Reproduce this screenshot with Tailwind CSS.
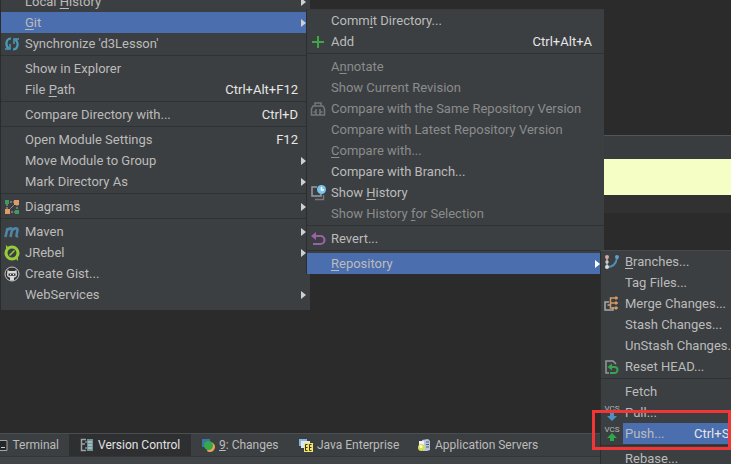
<!DOCTYPE html>
<html lang="en">
<head>
<meta charset="utf-8">
<title>Git push menu</title>
<script src="https://cdn.jsdelivr.net/npm/@tailwindcss/browser@4"></script>
</head>
<body class="relative flex h-screen flex-col overflow-hidden bg-[#2b2b2b] font-['Roboto','Noto_Sans',sans-serif] text-[13px] text-[#bbbbbb]">

<!-- Editor area -->
<main class="flex-1">
  <div class="h-[135px]"></div>
  <div class="h-6 border-t border-[#515658] bg-[#393d3f]"></div>
  <div class="h-9 bg-[#f5ffc5]"></div>
  <div class="h-[18px] bg-[#313131]"></div>
</main>

<!-- Tool window bar -->
<footer class="bg-[#3c3f41]">
  <nav class="flex h-[23px] border-t border-[#4b4e50] text-xs [&_button]:flex [&_button]:items-center [&_button]:gap-1 [&_button]:whitespace-nowrap [&_svg]:size-[14px] [&_svg]:shrink-0">
    <button class="w-[69px] shrink-0 justify-end pr-[10px]"><svg viewBox="0 0 14 14"><path d="M1 2.500h12v10H1z" fill="#242628" stroke="#a0a4a6"/><path d="M3 5l2 2-2 2M7 9.500h4" fill="none" stroke="#ccc"/></svg>Terminal</button>
    <button class="w-[122px] shrink-0 bg-[#2d2f30] pl-[11px] text-[#e2e2e2]"><svg viewBox="0 0 14 14"><path d="M6 1.500H1.500V6H5M1.500 9v3.500H6M1.500 6v3" fill="none" stroke="#9da2a5" stroke-width="1.500"/><path d="M7 1h6v12H7z" fill="#6f9499"/><path d="M8 4h4M8 7h4M8 10h4" stroke="#d5e1e2"/><path d="M5 4h2M5 10h2" stroke="#bbb"/></svg>Version Control</button>
    <button class="w-[98px] shrink-0 pl-[10px]"><svg viewBox="0 0 14 14"><path d="M1 1h8v8H1z" fill="#3578a6"/><path d="M9 4a5 5 0 1 1-3 9z" fill="#e5a453"/><circle cx="7.500" cy="7.500" r="4.500" fill="#35a84b"/></svg><span><u>9</u>: Changes</span></button>
    <button class="w-[117px] shrink-0 pl-[10px]"><svg viewBox="0 0 14 14"><path d="M0 1h8v7H0z" fill="#87b6d9"/><path d="M2 3h9v7H2z" fill="#dbe8f0"/><path d="M5 5h9v9H5z" fill="#f4e66a"/><path d="M8.500 6.500h-2v6h2M6.500 9.500h2M12.500 6.500h-2v6h2M10.500 9.500h2" fill="none" stroke="#393512"/></svg>Java Enterprise</button>
    <button class="shrink-0 pl-[11px]"><svg viewBox="0 0 14 14"><path d="M5 2l6-1 2 2v9l-3 1H6z" fill="#b9c5d6"/><path d="M9 4h3M9 6.500h3M9 9h3" stroke="#455d88"/><path d="M2 3h5v4H2z" fill="#edf1f5"/><circle cx="4.500" cy="9.500" r="3.500" fill="#d6dd54"/><circle cx="4" cy="8.500" r="1.500" fill="#f8fad0"/></svg>Application Servers</button>
  </nav>
  <div class="h-2 border-t border-[#343638] bg-[#414547]"></div>
</footer>

<!-- Project context menu -->
<div role="menu" class="absolute -top-[9px] left-0 w-[310px] border-l border-[#292b2c] bg-[#3c3f41] pb-[5px] [&_button]:relative [&_button]:flex [&_button]:h-[21px] [&_button]:w-full [&_button]:items-center [&_button]:gap-[5px] [&_button]:pr-3 [&_button]:pl-[3px] [&_button]:whitespace-nowrap [&_hr]:mt-px [&_hr]:mb-[2px] [&_hr]:border-[#2f3233] [&_kbd]:ml-auto [&_kbd]:font-[inherit] [&_kbd]:text-[#e6e6e6] [&_svg]:size-4 [&_svg]:shrink-0 [&_i]:absolute [&_i]:right-1 [&_i]:border-y-4 [&_i]:border-l-5 [&_i]:border-y-transparent [&_i]:border-l-[#d0d0d0] [&_u]:underline-offset-2">
  <button><svg></svg><span>Local <u>H</u>istory</span><i></i></button>
  <button class="bg-[#4b6eaf]"><svg></svg><span><u>G</u>it</span><i></i></button>
  <button><svg viewBox="0 0 16 16" fill="none" stroke="#4a9abb" stroke-width="2.200"><path d="M7 2.500C2 2.500 1 9 4.500 12.500M9 13.500c5 0 6-6.500 2.500-10"/><path d="M1 13h5V8M15 3h-5v5" stroke-width="1.500"/></svg>Synchronize 'd3Lesson'</button>
  <hr>
  <button><svg></svg>Show in Explorer</button>
  <button><svg></svg><span>File <u>P</u>ath</span><kbd>Ctrl+Alt+F12</kbd></button>
  <hr>
  <button><svg></svg>Compare Directory with...<kbd>Ctrl+D</kbd></button>
  <hr>
  <button><svg></svg>Open Module Settings<kbd>F12</kbd></button>
  <button><svg></svg>Move Module to Group<i></i></button>
  <button><svg></svg>Mark Directory As<i></i></button>
  <hr>
  <button><svg viewBox="0 0 16 16"><path d="M3 3h10v10H3zM3 13L13 3" fill="none" stroke="#a8adaf" stroke-dasharray="2 1"/><path d="M1 1h4v4H1zM11 11h4v4h-4z" fill="#3f9b5b"/><path d="M10 1h5v5h-5zM1 10h5v5H1z" fill="#e09a66"/></svg>Diagrams<i></i></button>
  <hr>
  <button><svg viewBox="0 0 16 16" fill="none" stroke="#4f86a8" stroke-width="2.600"><path d="M1.500 13L3.500 4M3 6.500C5 4 8.500 3.500 8 6L6.500 13M8 6.500c2-2.500 6-3 5.500-.5L12.500 11c-.3 1.200.4 1.500 1.500 1"/></svg>Maven<i></i></button>
  <button><svg viewBox="0 0 16 16"><path d="M4 2L2 0v4zM12 14l2 2v-4z" fill="#99cc3d"/><circle cx="8" cy="8" r="6" fill="none" stroke="#99cc3d" stroke-width="3"/><path d="M5.500 10.500l5-5" stroke="#99cc3d" stroke-width="1.500"/></svg>JRebel<i></i></button>
  <button><svg viewBox="0 0 16 16"><circle cx="8" cy="8" r="7" fill="#303234" stroke="#c6c8c9"/><path d="M3.500 4l2 1h5l2-1 .5 5c-.5 2-2 2.500-3 2.500v3H6v-3C4.500 11.500 3 10.500 3 9z" fill="#d8dada"/><path d="M4.500 7.500h7v2.300h-7z" fill="#383a3c"/><path d="M6 8.500h1M9 8.500h1" stroke="#eee"/></svg>Create Gist...</button>
  <button><svg></svg>WebServices<i></i></button>
</div>

<!-- Git submenu -->
<div role="menu" class="absolute top-[9px] left-[306px] w-[298px] border-t border-l border-t-[#393c3d] border-l-[#2b2d2e] bg-[#3c3f41] [&_button]:relative [&_button]:flex [&_button]:h-[21px] [&_button]:w-full [&_button]:items-center [&_button]:gap-[5px] [&_button]:pr-3 [&_button]:pl-[3px] [&_button]:whitespace-nowrap [&_button:disabled]:text-[#8a8c8d] [&_hr]:mt-px [&_hr]:mb-[2px] [&_hr]:border-[#2f3233] [&_kbd]:ml-auto [&_kbd]:font-[inherit] [&_kbd]:text-[#e6e6e6] [&_svg]:size-4 [&_svg]:shrink-0 [&_u]:underline-offset-2">
  <button><svg></svg><span>Comm<u>i</u>t Directory...</span></button>
  <button><svg viewBox="0 0 16 16"><path d="M8 2v12M2 8h12" stroke="#3fa648" stroke-width="2"/></svg>Add<kbd>Ctrl+Alt+A</kbd></button>
  <hr>
  <button disabled><svg></svg><span>A<u>n</u>notate</span></button>
  <button disabled><svg></svg>Show Current Revision</button>
  <button disabled><svg viewBox="0 0 16 16" fill="none" stroke="#74787a" stroke-width="1.500"><path d="M5 4.500V2h6v2.500M3 5h10l1.500 3v6h-13V8zM6 8v6M10 8v6M3.500 11H6M10 11h2.500"/></svg>Compare with the Same Repository Version</button>
  <button disabled><svg></svg>Compare with Latest Repository Version</button>
  <button disabled><svg></svg><span><u>C</u>ompare with...</span></button>
  <button><svg></svg>Compare with Branch...</button>
  <button><svg viewBox="0 0 16 16"><path d="M7 2H2v9h9V9" fill="none" stroke="#989ca0" stroke-width="1.500"/><path d="M5 14.500h8.500V10" fill="none" stroke="#75797c" stroke-width="1.500"/><circle cx="11.500" cy="4.500" r="4.500" fill="#79c4eb"/><path d="M11.500 2v3H14" fill="none" stroke="#f4fbff" stroke-width="1.500"/></svg><span>Show <u>H</u>istory</span></button>
  <button disabled><svg></svg><span>Show History <u>f</u>or Selection</span></button>
  <hr>
  <button><svg viewBox="0 0 16 16"><path d="M4 5h6.500a3.500 3.500 0 0 1 0 8H3" fill="none" stroke="#9a62a5" stroke-width="2.200"/><path d="M1 5l5-4v8z" fill="#9a62a5"/></svg>Revert...</button>
  <hr>
  <button class="bg-[#4b6eaf]"><svg></svg><span><u>R</u>epository</span><span class="absolute right-1 border-y-4 border-l-5 border-y-transparent border-l-white"></span></button>
</div>

<!-- Repository submenu -->
<div role="menu" class="absolute top-[250px] right-0 left-[600px] overflow-hidden border-t border-l border-t-[#484b4d] border-l-[#2b2d2e] bg-[#3c3f41] [&_button]:flex [&_button]:h-[21px] [&_button]:w-full [&_button]:items-center [&_button]:gap-[5px] [&_button]:pl-[3px] [&_button]:whitespace-nowrap [&_hr]:mt-px [&_hr]:mb-[2px] [&_hr]:border-[#2f3233] [&_svg]:size-4 [&_svg]:shrink-0 [&_u]:underline-offset-2">
  <button><svg viewBox="0 0 16 16"><path d="M3 3v10" stroke="#a9adaf" stroke-width="1.500"/><path d="M3 13c5 0 9-2 10-9" fill="none" stroke="#4f8fb8" stroke-width="1.800"/><circle cx="3" cy="3" r="2" fill="#d8a3a3"/><circle cx="3" cy="8" r="1.700" fill="#c8caca"/><circle cx="3" cy="13" r="2" fill="#d9dbdb"/><circle cx="13" cy="3" r="2" fill="#5b9fca"/></svg><span><u>B</u>ranches...</span></button>
  <button><svg></svg>Tag Files...</button>
  <button><svg viewBox="0 0 16 16" fill="none" stroke-width="1.500"><path d="M5 6H1v8h8v-3M3.500 9H7" stroke="#a7abad"/><path d="M14 2H6.500v10H14M6.500 7H14" stroke="#d29a68"/><path d="M12 .5v3M12 5.500v3M12 10.500v3" stroke="#d29a68" stroke-width="2"/></svg>Merge Changes...</button>
  <button><svg></svg>Stash Changes...</button>
  <button><svg></svg>UnStash Changes...</button>
  <button><svg viewBox="0 0 16 16" fill="none"><path d="M5 14H2V2h7l3 3" stroke="#94999c" stroke-width="1.500"/><path d="M6 8h4.500a3 3 0 0 1 0 6H6" stroke="#36a450" stroke-width="2"/><path d="M3.500 8L8 4.500v7z" fill="#36a450"/></svg>Reset HEAD...</button>
  <hr>
  <button><svg></svg>Fetch</button>
  <button><svg viewBox="0 0 16 16"><text x="8" y="6" text-anchor="middle" font-size="8" fill="#b4b6b7">VCS</text><path d="M6 8h4v3h3l-5 5-5-5h3z" fill="#4b91c6"/></svg>Pull...</button>
  <button class="bg-[linear-gradient(to_right,#3c3f41_22px,#4b6eaf_22px)]"><svg viewBox="0 0 16 16"><text x="8" y="6" text-anchor="middle" font-size="8" fill="#b4b6b7">VCS</text><path d="M8 7l5 5h-3v3H6v-3H3z" fill="#2fa84a"/></svg><span class="w-16 shrink-0 text-left">Push...</span><kbd class="font-[inherit] text-[#e6e6e6]">Ctrl+Shift+K</kbd></button>
  <hr>
  <button><svg></svg>Rebase...</button>
</div>

<!-- Callout -->
<div class="pointer-events-none absolute top-[410px] right-0 left-[592px] h-10 border-3 border-[#f23535]"></div>
</body>
</html>
